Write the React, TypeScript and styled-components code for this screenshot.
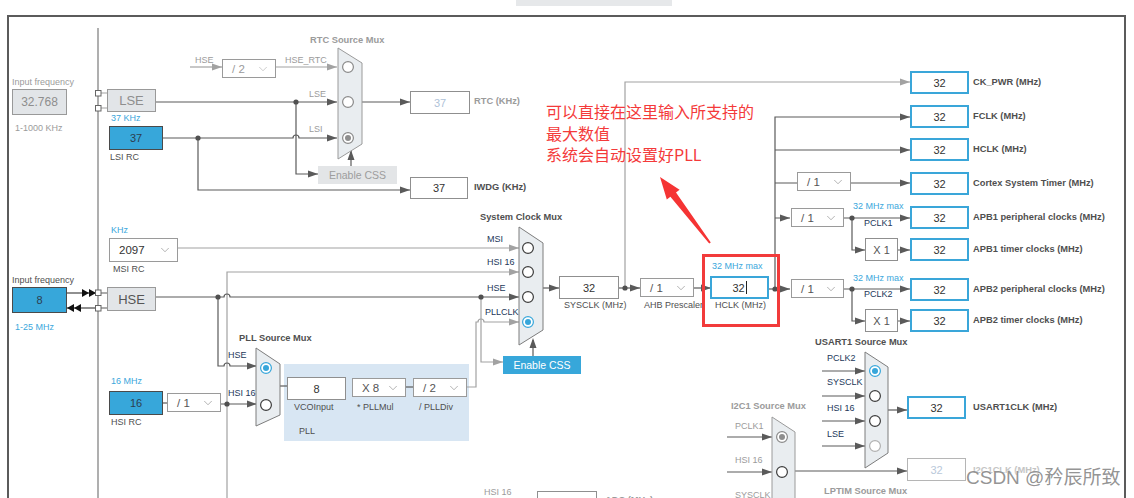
import styled, { createGlobalStyle, css } from "styled-components";
import { ChevronDown } from "lucide-react";

const GlobalStyle = createGlobalStyle`
  html, body { margin: 0; padding: 0; background: #fff; }
  body { font-family: "Liberation Sans", Arial, sans-serif; }
`;

type Pos = { $x: number; $y: number };
type Size = Pos & { $w: number; $h: number };

const at = css<Pos>`
  position: absolute;
  left: ${(p) => p.$x}px;
  top: ${(p) => p.$y}px;
`;

const sized = css<Size>`
  ${at}
  width: ${(p) => p.$w}px;
  height: ${(p) => p.$h}px;
  box-sizing: border-box;
  display: flex;
  align-items: center;
  justify-content: center;
`;

const tones = {
  dark: "#4f4f4f",
  muted: "#9b9b9b",
  faint: "#c4c4c4",
  blue: "#3ba7dc",
  navy: "#23385a",
};
type Tone = keyof typeof tones;

const Page = styled.div`
  position: relative;
  width: 1134px;
  height: 498px;
  overflow: hidden;
  background: #fff;
`;

const TopTab = styled.div`
  margin-left: 516px;
  width: 156px;
  height: 6px;
  background: #e6e8ea;
`;

const Frame = styled.div`
  margin: 9px 0 0 7px;
  width: 1115px;
  height: 500px;
  border: 2px solid #5b5b5b;
  border-bottom: none;
`;

const Diagram = styled.div`
  position: absolute;
  inset: 0;
`;

const Wires = styled.svg`
  position: absolute;
  left: 0;
  top: 0;
`;

const Label = styled.span<Pos & { $tone: Tone; $bold?: boolean }>`
  ${at}
  font-size: ${(p) => (p.$bold ? 9.3 : 9)}px;
  line-height: 10px;
  font-weight: ${(p) => (p.$bold ? 700 : 400)};
  color: ${(p) => tones[p.$tone]};
  white-space: nowrap;
`;

const Field = styled.div<Size & { $tone?: Tone }>`
  ${sized}
  background: #fff;
  border: 1px solid #8f8f8f;
  font-size: 11px;
  color: ${(p) => (p.$tone === "faint" ? "#aec2d8" : "#333")};
`;

const Output = styled.div<Size & { $off?: boolean }>`
  ${sized}
  background: #fff;
  border: ${(p) => (p.$off ? "1px solid #b5b5b5" : "2px solid #3aa6d9")};
  font-size: 11px;
  color: ${(p) => (p.$off ? "#b9c8da" : "#333")};
`;

const Source = styled.div<Size>`
  ${sized}
  background: #37a7da;
  border: 1px solid #4a4a4a;
  font-size: 11px;
  color: #2c3e50;
`;

const Greyed = styled.div<Size & { $big?: boolean; $dim?: boolean }>`
  ${sized}
  background: #e2e5e8;
  border: 1px solid #999;
  font-size: ${(p) => (p.$big ? 13 : 12)}px;
  color: ${(p) => (p.$dim ? "#8e8e8e" : "#555")};
`;

const Selector = styled.div<Size & { $dim?: boolean }>`
  ${sized}
  justify-content: space-between;
  padding: 0 5px 0 9px;
  background: #fff;
  border: 1px solid #9a9a9a;
  font-size: 11.5px;
  color: ${(p) => (p.$dim ? "#9a9a9a" : "#555")};
`;

const Multiplier = styled.div<Size>`
  ${sized}
  background: #fff;
  border: 1px solid #8f8f8f;
  font-size: 11px;
  color: #555;
`;

const PllPanel = styled.div<Size>`
  ${sized}
  background: #d8e6f3;
`;

const CssButton = styled.div<Size & { $on?: boolean }>`
  ${sized}
  font-size: 10.5px;
  background: ${(p) => (p.$on ? "#37a7da" : "#e3e5e7")};
  color: ${(p) => (p.$on ? "#fff" : "#9d9d9d")};
`;

const Highlight = styled.div<Size>`
  ${at}
  width: ${(p) => p.$w}px;
  height: ${(p) => p.$h}px;
  box-sizing: border-box;
  border: 3px solid #f23b3b;
`;

const Caret = styled.span`
  display: inline-block;
  width: 1px;
  height: 13px;
  margin-left: 1px;
  background: #222;
`;

const Note = styled.div<Pos>`
  ${at}
  font-family: "Noto Sans CJK SC", "Liberation Sans", sans-serif;
  font-size: 16px;
  line-height: 21.5px;
  color: #f43a3a;
  white-space: nowrap;
`;

const Watermark = styled.div<Pos>`
  ${at}
  font-family: "Liberation Sans", "Noto Sans CJK SC", sans-serif;
  font-size: 19px;
  color: rgba(120, 120, 120, 0.8);
  text-shadow: 0 0 2px #fff;
  white-space: nowrap;
`;

const D = "#5a5a5a";
const L = "#a2a2a2";

const wires: [string, string][] = [
  ["M190 67H222", L],
  ["M276 67H337", L],
  ["M156 102H337", D],
  ["M163 138H293a3 3 0 0 1 6 0H337", D],
  ["M296 102V174H318", D],
  ["M198 138V190H410", D],
  ["M351 166V151", D],
  ["M361 102H410", D],
  ["M101 93H107M101 108H107", L],
  ["M66 293H96M67 308H96", "#222"],
  ["M101 293H107M101 308H107", D],
  ["M178 248H519", L],
  ["M227 498V272H519", L],
  ["M156 297H224a3 3 0 0 1 6 0H519", D],
  ["M218 297V366H224a3 3 0 0 1 6 0H257", D],
  ["M163 403H167", D],
  ["M221 404H257", D],
  ["M280 386H287", D],
  ["M406 387H413", D],
  ["M467 387H476V322H478a3 3 0 0 1 6 0H519", L],
  ["M481 297V362H503", L],
  ["M533 356V340", D],
  ["M543 288H559", D],
  ["M618 288H640", D],
  ["M625 288V82H910", L],
  ["M694 288H710", D],
  ["M769 289H790", D],
  ["M775 289V117H910", D],
  ["M775 150H910", D],
  ["M775 183H797M851 183H910", D],
  ["M775 218H790M844 218H910M852 218V250H865M898 250H910", D],
  ["M844 289H910M852 289V321H865M898 321H910", D],
  ["M822 371H865M822 396H865M822 421H865M822 446H865", D],
  ["M888 410H907", D],
  ["M727 437H772M727 472H772", D],
  ["M795 471H907", D],
  ["M98 28V498", "#7a7a7a"],
];

const arrows: [number, number, string?, string?][] = [
  [222, 67, L], [337, 67, L], [337, 102], [337, 138], [318, 174], [410, 190],
  [351, 150, D, "up"], [410, 102], [519, 248, L], [519, 272, L], [519, 297],
  [257, 366], [257, 404], [519, 322, L], [503, 362, L], [533, 338, D, "up"],
  [559, 288], [640, 288], [910, 82, L], [711, 288], [790, 289], [910, 117],
  [910, 150], [910, 183], [790, 218], [910, 218], [865, 250], [910, 250],
  [910, 289], [865, 321], [910, 321], [865, 371], [865, 396], [865, 421],
  [865, 446], [907, 410], [772, 437], [772, 472], [907, 471],
];

const dots: [number, number][] = [
  [296, 102], [198, 138], [218, 297], [481, 297], [227, 404], [625, 288],
  [775, 289], [852, 218], [852, 289],
];

type Pin = { y: number; state?: "on" | "grey" | "faint" | "off" };
const muxes: { pts: string; x: number; pins: Pin[]; dim?: boolean }[] = [
  { pts: "338,48 362,63 362,144 338,159", x: 348, dim: true,
    pins: [{ y: 67, state: "off" }, { y: 102, state: "off" }, { y: 138, state: "grey" }] },
  { pts: "519,227 543,243 543,330 519,345", x: 528,
    pins: [{ y: 248 }, { y: 272 }, { y: 297 }, { y: 322, state: "on" }] },
  { pts: "256,348 280,364 280,415 256,426", x: 266,
    pins: [{ y: 368, state: "on" }, { y: 405 }] },
  { pts: "865,352 888,367 888,453 865,468", x: 875,
    pins: [{ y: 371, state: "on" }, { y: 396 }, { y: 421 }, { y: 446, state: "faint" }] },
  { pts: "772,417 795,432 795,530 772,545", x: 782, dim: true,
    pins: [{ y: 437, state: "grey" }, { y: 472 }] },
];

const ring: Record<string, string> = {
  on: "#37a6da", grey: "#8a8a8a", faint: "#b0b0b0", off: "#8a8a8a",
};

const outputs = [
  { y: 71, text: "CK_PWR (MHz)" },
  { y: 105, text: "FCLK (MHz)" },
  { y: 138, text: "HCLK (MHz)" },
  { y: 172, text: "Cortex System Timer (MHz)" },
  { y: 206, text: "APB1 peripheral clocks (MHz)" },
  { y: 238, text: "APB1 timer clocks (MHz)" },
  { y: 278, text: "APB2 peripheral clocks (MHz)" },
  { y: 309, text: "APB2 timer clocks (MHz)" },
];

const labels: [number, number, string, Tone, boolean?][] = [
  [12, 77, "Input frequency", "muted"],
  [15, 123, "1-1000 KHz", "muted"],
  [111, 113, "37 KHz", "blue"],
  [110, 152, "LSI RC", "dark"],
  [195, 55, "HSE", "muted"],
  [285, 55, "HSE_RTC", "muted"],
  [309, 89, "LSE", "muted"],
  [309, 124, "LSI", "muted"],
  [310, 35, "RTC Source Mux", "muted", true],
  [474, 96, "RTC (KHz)", "muted", true],
  [474, 182, "IWDG (KHz)", "dark", true],
  [111, 225, "KHz", "blue"],
  [113, 264, "MSI RC", "dark"],
  [12, 275, "Input frequency", "dark"],
  [15, 322, "1-25 MHz", "blue"],
  [239, 333, "PLL Source Mux", "dark", true],
  [228, 350, "HSE", "navy"],
  [228, 388, "HSI 16", "navy"],
  [111, 376, "16 MHz", "blue"],
  [111, 417, "HSI RC", "dark"],
  [294, 402, "VCOInput", "dark"],
  [357, 402, "* PLLMul", "dark"],
  [419, 402, "/ PLLDiv", "dark"],
  [299, 426, "PLL", "dark"],
  [480, 212, "System Clock Mux", "dark", true],
  [487, 234, "MSI", "navy"],
  [487, 257, "HSI 16", "navy"],
  [487, 283, "HSE", "navy"],
  [485, 307, "PLLCLK", "navy"],
  [564, 300, "SYSCLK (MHz)", "dark"],
  [644, 300, "AHB Prescaler", "dark"],
  [712, 261, "32 MHz max", "blue"],
  [715, 300, "HCLK (MHz)", "dark"],
  [853, 201, "32 MHz max", "blue"],
  [864, 218, "PCLK1", "navy"],
  [853, 273, "32 MHz max", "blue"],
  [864, 289, "PCLK2", "navy"],
  [815, 337, "USART1 Source Mux", "dark", true],
  [827, 353, "PCLK2", "navy"],
  [827, 377, "SYSCLK", "navy"],
  [827, 403, "HSI 16", "navy"],
  [827, 429, "LSE", "navy"],
  [973, 402, "USART1CLK (MHz)", "dark", true],
  [731, 401, "I2C1 Source Mux", "muted", true],
  [735, 421, "PCLK1", "muted"],
  [735, 455, "HSI 16", "muted"],
  [735, 490, "SYSCLK", "muted"],
  [973, 465, "I2C1CLK (MHz)", "faint", true],
  [824, 486, "LPTIM Source Mux", "muted", true],
  [484, 487, "HSI 16", "muted"],
  [605, 495, "ADC (MHz)", "muted", true],
];

const selectors: { x: number; y: number; w: number; text: string; dim?: boolean }[] = [
  { x: 222, y: 59, w: 54, text: "/ 2", dim: true },
  { x: 167, y: 393, w: 54, text: "/ 1" },
  { x: 352, y: 378, w: 54, text: "X 8" },
  { x: 413, y: 378, w: 54, text: "/ 2" },
  { x: 640, y: 278, w: 54, text: "/ 1" },
  { x: 797, y: 172, w: 54, text: "/ 1" },
  { x: 791, y: 208, w: 53, text: "/ 1" },
  { x: 791, y: 279, w: 53, text: "/ 1" },
];

function Arrow({ x, y, color = D, dir }: { x: number; y: number; color?: string; dir?: string }) {
  const pts =
    dir === "up"
      ? `${x - 3.5},${y + 10} ${x},${y} ${x + 3.5},${y + 10}`
      : `${x - 10},${y - 3.5} ${x},${y} ${x - 10},${y + 3.5}`;
  return <polygon points={pts} fill={color} />;
}

function Head({ x, y, left }: { x: number; y: number; left?: boolean }) {
  const pts = left
    ? `${x + 7},${y - 4} ${x},${y} ${x + 7},${y + 4}`
    : `${x - 7},${y - 4} ${x},${y} ${x - 7},${y + 4}`;
  return <polygon points={pts} fill="#111" />;
}

export default function App() {
  return (
    <>
      <GlobalStyle />
      <Page>
        <TopTab />
        <Frame />
        <Diagram>
          <PllPanel $x={284} $y={364} $w={185} $h={77} />

          <Wires width={1134} height={498} viewBox="0 0 1134 498">
            {wires.map(([d, c], i) => (
              <path key={i} d={d} stroke={c} strokeWidth={1.2} fill="none" />
            ))}
            {arrows.map(([x, y, c, dir], i) => (
              <Arrow key={i} x={x} y={y} color={c} dir={dir} />
            ))}
            {dots.map(([x, y], i) => (
              <circle key={i} cx={x} cy={y} r={2.6} fill="#505050" />
            ))}
            <Head x={89} y={293} />
            <Head x={96} y={293} />
            <Head x={67} y={308} left />
            <Head x={74} y={308} left />
            <rect x={95.5} y={90.5} width={5.5} height={5.5} fill="#fff" stroke="#666" />
            <rect x={95.5} y={105.5} width={5.5} height={5.5} fill="#fff" stroke="#666" />
            <rect x={95.5} y={290} width={5.5} height={5.5} fill="#fff" stroke="#666" />
            <rect x={95.5} y={305.5} width={5.5} height={5.5} fill="#fff" stroke="#666" />
            {muxes.map((m, i) => (
              <g key={i}>
                <polygon points={m.pts} fill="#e9edf0" stroke={m.dim ? "#9a9a9a" : "#7d7d7d"} strokeWidth={1} />
                {m.pins.map((p, j) => {
                  const stroke = p.state ? ring[p.state] : "#3c3c3c";
                  return (
                    <g key={j}>
                      <circle cx={m.x} cy={p.y} r={5.4} fill="#fff" stroke={stroke} strokeWidth={1.2} />
                      {(p.state === "on" || p.state === "grey") && (
                        <circle cx={m.x} cy={p.y} r={3} fill={p.state === "on" ? "#37a6da" : "#8e8e8e"} />
                      )}
                    </g>
                  );
                })}
              </g>
            ))}
            <polygon
              points="660,177 679.6,189.8 676,192.5 710.8,242.4 709.2,243.6 670.4,196.7 666.8,199.4"
              fill="#f53434"
            />
          </Wires>

          <Greyed $x={12} $y={89} $w={55} $h={26} $dim>32.768</Greyed>
          <Greyed $x={107} $y={89} $w={49} $h={23} $big $dim>LSE</Greyed>
          <Source $x={109} $y={126} $w={54} $h={24}>37</Source>
          <CssButton $x={318} $y={166} $w={79} $h={18}>Enable CSS</CssButton>
          <Field $x={410} $y={91} $w={60} $h={23} $tone="faint">37</Field>
          <Field $x={410} $y={177} $w={58} $h={22}>37</Field>

          <Selector $x={109} $y={238} $w={69} $h={24}>
            <span style={{ color: "#333" }}>2097</span>
            <ChevronDown size={14} strokeWidth={1.1} color="#8a8a8a" />
          </Selector>
          <Source $x={12} $y={287} $w={55} $h={26}>8</Source>
          <Greyed $x={107} $y={287} $w={49} $h={24} $big>HSE</Greyed>
          <Source $x={109} $y={391} $w={54} $h={24}>16</Source>

          {selectors.map((s, i) => (
            <Selector key={i} $x={s.x} $y={s.y} $w={s.w} $h={19} $dim={s.dim}>
              <span>{s.text}</span>
              <ChevronDown size={14} strokeWidth={1.1} color={s.dim ? "#b0b0b0" : "#8a8a8a"} />
            </Selector>
          ))}

          <Field $x={287} $y={377} $w={59} $h={23}>8</Field>
          <CssButton $x={503} $y={356} $w={78} $h={18} $on>Enable CSS</CssButton>
          <Field $x={559} $y={276} $w={60} $h={23}>32</Field>
          <Output $x={710} $y={276} $w={59} $h={23}>
            32<Caret />
          </Output>

          {outputs.map((o) => (
            <Output key={o.text} $x={910} $y={o.y} $w={59} $h={23}>32</Output>
          ))}
          {outputs.map((o) => (
            <Label key={o.text} $x={973} $y={o.y + 6} $tone="dark" $bold>{o.text}</Label>
          ))}

          <Multiplier $x={865} $y={238} $w={33} $h={23}>X 1</Multiplier>
          <Multiplier $x={865} $y={309} $w={33} $h={23}>X 1</Multiplier>
          <Output $x={907} $y={396} $w={59} $h={23}>32</Output>
          <Output $x={907} $y={458} $w={59} $h={23} $off>32</Output>
          <Field $x={537} $y={491} $w={60} $h={20} />

          {labels.map(([x, y, text, tone, bold], i) => (
            <Label key={i} $x={x} $y={y} $tone={tone} $bold={bold}>{text}</Label>
          ))}

          <Highlight $x={702} $y={254} $w={78} $h={73} />

          <Note $x={546} $y={101}>
            可以直接在这里输入所支持的
            <br />
            最大数值
            <br />
            系统会自动设置好PLL
          </Note>

          <Watermark $x={966} $y={462}>CSDN @矜辰所致</Watermark>
        </Diagram>
      </Page>
    </>
  );
}
